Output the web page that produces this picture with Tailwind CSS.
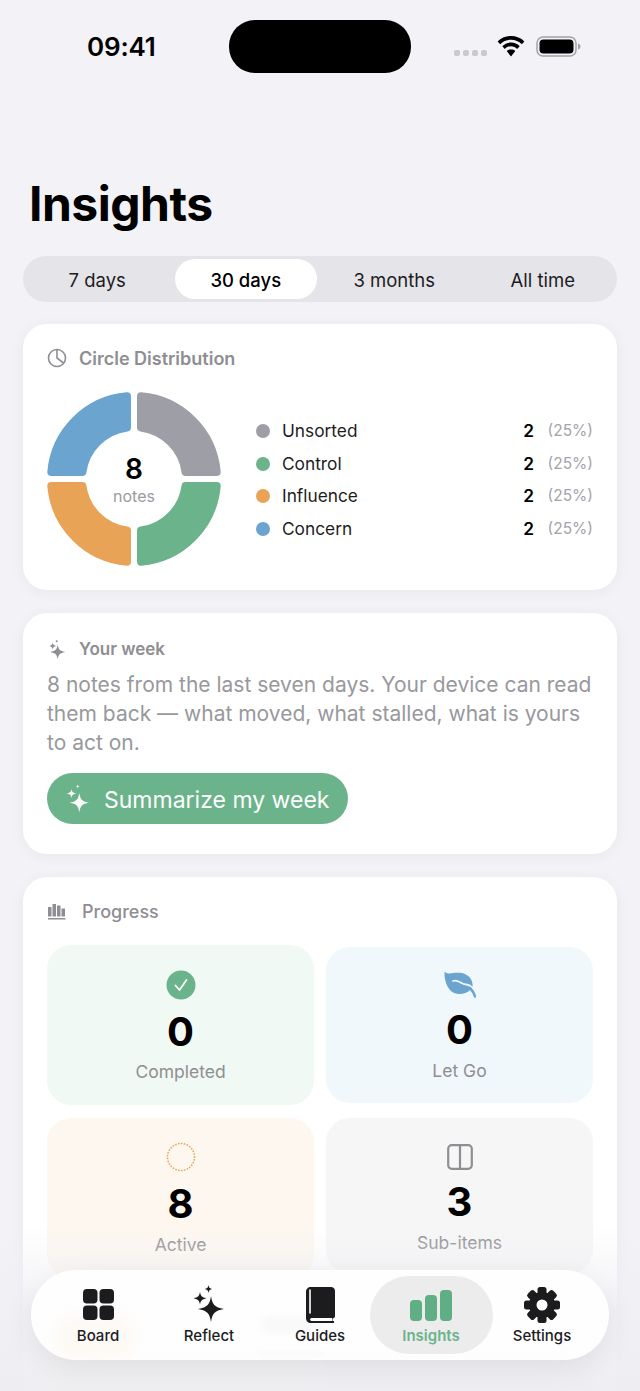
<!DOCTYPE html>
<html>

<head>
    <meta charset="utf-8">
    <script src="https://cdn.jsdelivr.net/npm/@tailwindcss/browser@4"></script>
</head>

<body class="bg-[#f2f2f7]">
    <div class="relative h-[1391px] w-[640px] overflow-hidden bg-[#f2f2f7] font-['Inter',sans-serif] text-black">

        <!-- status bar -->
        <div class="flex items-center pt-[20px] h-[73px]">
            <div class="w-[229px] pl-[87px] text-[26px] leading-[53px] font-semibold tracking-[-0.2px]">09:41</div>
            <div class="w-[182px] h-[53px] rounded-[26px] bg-black"></div>
            <div class="flex gap-[3px] ml-[43px] mt-[13px]">
                <div class="w-[6px] h-[6px] rounded-[2px] bg-[#c9c9ce]"></div>
                <div class="w-[6px] h-[6px] rounded-[2px] bg-[#c9c9ce]"></div>
                <div class="w-[6px] h-[6px] rounded-[2px] bg-[#c9c9ce]"></div>
                <div class="w-[6px] h-[6px] rounded-[2px] bg-[#c9c9ce]"></div>
            </div>
            <svg class="ml-[10px] mt-[0px]" width="28" height="21" viewBox="0 0 28 21">
                <path d="M14 0C8.8 0 4 2 .6 5.4l2.6 2.8C6 5.4 9.8 3.7 14 3.7s8 1.7 10.8 4.5l2.6-2.8C24 2 19.2 0 14 0Z" fill="#000" />
                <path d="M14 6.6c-3.4 0-6.5 1.3-8.7 3.6l2.6 2.7c1.6-1.6 3.7-2.6 6.1-2.6s4.500 1 6.100 2.600l2.600-2.700C20.500 7.900 17.400 6.600 14 6.600Z" fill="#000" />
                <path d="M14 13.300c-1.700 0-3.200.7-4.300 1.800L14 20.500l4.300-5.400c-1.100-1.100-2.600-1.800-4.300-1.800Z" fill="#000" />
            </svg>
            <svg class="ml-[11px] mt-[-1px]" width="45" height="21" viewBox="0 0 45 21">
                <rect x="1" y="1" width="39" height="19" rx="6" fill="none" stroke="#a3a3a8" stroke-width="1.500" />
                <rect x="3.500" y="3.500" width="34" height="14" rx="4" fill="#000" />
                <path d="M42 7.500c1.500.4 2.500 1.500 2.500 3s-1 2.600-2.500 3Z" fill="#a3a3a8" />
            </svg>
        </div>

        <div class="pl-[29px] pt-[102px] text-[48px] leading-[58px] font-bold tracking-[-0.5px]">Insights</div>

        <main class="px-[23px] mt-[23px]">
            <!-- range picker -->
            <div class="grid grid-cols-4 h-[46px] rounded-[23px] bg-[#e4e4e9] text-[18.500px] text-[#1c1c1e]">
                <div class="flex items-center justify-center pt-[3px]">7 days</div>
                <div class="flex items-center justify-center m-[3px] pt-[3px] rounded-[20px] bg-white font-medium text-black">30 days</div>
                <div class="flex items-center justify-center pt-[3px]">3 months</div>
                <div class="flex items-center justify-center pt-[3px]">All time</div>
            </div>

            <!-- circle distribution -->
            <section class="mt-[22px] h-[266px] rounded-[24px] bg-white px-[24px] pt-[24px] shadow-[0_2px_14px_rgba(0,0,0,0.05)]">
                <div class="flex items-center h-[20px] text-[18px] font-semibold text-[#8e8e93]">
                    <svg width="20" height="20" viewBox="0 0 20 20" fill="none" stroke="#8e8e93" stroke-width="1.600">
                        <circle cx="10" cy="10" r="8.500" />
                        <path d="M10 2v8l6.500 5" />
                    </svg>
                    <span class="ml-[12px]">Circle Distribution</span>
                </div>
                <div class="flex items-center mt-[24px]">
                    <div class="relative w-[174px] h-[174px] shrink-0">
                        <svg width="174" height="174" viewBox="0 0 174 174" stroke-width="8" stroke-linejoin="round">
                            <path d="M94 4.300A83 83 0 0 1 169.700 80L138.530 80A52 52 0 0 0 94 35.470Z" fill="#9e9ea7" stroke="#9e9ea7" />
                            <path d="M94 4.300A83 83 0 0 1 169.700 80L138.530 80A52 52 0 0 0 94 35.470Z" fill="#6bb38a" stroke="#6bb38a" transform="rotate(90 87 87)" />
                            <path d="M94 4.300A83 83 0 0 1 169.700 80L138.530 80A52 52 0 0 0 94 35.470Z" fill="#e9a357" stroke="#e9a357" transform="rotate(180 87 87)" />
                            <path d="M94 4.300A83 83 0 0 1 169.700 80L138.530 80A52 52 0 0 0 94 35.470Z" fill="#6aa4cf" stroke="#6aa4cf" transform="rotate(270 87 87)" />
                        </svg>
                        <div class="absolute inset-0 flex flex-col items-center justify-center">
                            <div class="text-[28px] leading-[34px] font-semibold">8</div>
                            <div class="text-[16px] leading-[20px] text-[#9a9a9f]">notes</div>
                        </div>
                    </div>
                    <div class="ml-[35px] mt-[2px] flex-1 flex flex-col gap-[12.500px] text-[17.300px] leading-[20px] text-[#1c1c1e]">
                        <div class="flex items-center">
                            <div class="w-[14px] h-[14px] rounded-full bg-[#9e9ea7]"></div>
                            <span class="ml-[12px] flex-1">Unsorted</span>
                            <span class="font-semibold text-black">2</span>
                            <span class="w-[59px] text-right text-[15.500px] text-[#a3a3a8]">(25%)</span>
                        </div>
                        <div class="flex items-center">
                            <div class="w-[14px] h-[14px] rounded-full bg-[#6bb38a]"></div>
                            <span class="ml-[12px] flex-1">Control</span>
                            <span class="font-semibold text-black">2</span>
                            <span class="w-[59px] text-right text-[15.500px] text-[#a3a3a8]">(25%)</span>
                        </div>
                        <div class="flex items-center">
                            <div class="w-[14px] h-[14px] rounded-full bg-[#e9a357]"></div>
                            <span class="ml-[12px] flex-1">Influence</span>
                            <span class="font-semibold text-black">2</span>
                            <span class="w-[59px] text-right text-[15.500px] text-[#a3a3a8]">(25%)</span>
                        </div>
                        <div class="flex items-center">
                            <div class="w-[14px] h-[14px] rounded-full bg-[#6aa4cf]"></div>
                            <span class="ml-[12px] flex-1">Concern</span>
                            <span class="font-semibold text-black">2</span>
                            <span class="w-[59px] text-right text-[15.500px] text-[#a3a3a8]">(25%)</span>
                        </div>
                    </div>
                </div>
            </section>

            <!-- your week -->
            <section class="mt-[23px] h-[241px] rounded-[24px] bg-white px-[24px] pt-[27px] shadow-[0_2px_14px_rgba(0,0,0,0.05)]">
                <div class="flex items-center h-[20px] text-[17px] font-semibold text-[#8e8e93]">
                    <svg width="20" height="20" viewBox="0 0 20 20" fill="#8e8e93">
                        <path d="M10.700 4.500c.7 4.800 2.200 6.500 7.500 7.500-5.300 1-6.800 2.700-7.500 7.500-.7-4.800-2.200-6.500-7.500-7.500 5.300-1 6.800-2.700 7.500-7.500Z" />
                        <path d="M5.700 2.500c.4 2.200 1 2.900 3.500 3.500-2.500.6-3.100 1.300-3.500 3.500-.4-2.200-1-2.900-3.500-3.500 2.500-.6 3.100-1.300 3.500-3.500Z" />
                        <circle cx="9.700" cy="1.200" r="1" />
                    </svg>
                    <span class="ml-[12px]">Your week</span>
                </div>
                <p class="mt-[10px] text-[21px] leading-[29px] text-[#98989d]">8 notes from the last seven days. Your device can read them back — what moved, what stalled, what is yours to act on.</p>
                <div class="mt-[16px] inline-flex items-center h-[51px] w-[301px] rounded-[26px] bg-[#6bb38a] pl-[19px] text-[23px] text-white">
                    <svg width="26" height="30" viewBox="0 0 26 30" fill="#fff">
                        <path d="M13.300 9c1 6.500 2.800 8.600 9.700 9.700-6.900 1.100-8.700 3.200-9.700 9.700-1-6.500-2.800-8.600-9.700-9.700 6.900-1.100 8.700-3.200 9.700-9.700Z" />
                        <path d="M5.500 5c.5 3 1.300 3.900 5 4.500-3.700.6-4.500 1.500-5 4.500-.5-3-1.300-3.900-5-4.500 3.700-.6 4.500-1.500 5-4.500Z" />
                        <path d="M11.700 .5c.2 1.300.6 1.700 2 2-1.400.3-1.800.7-2 2-.2-1.300-.6-1.700-2-2 1.400-.3 1.800-.7 2-2Z" />
                    </svg>
                    <span class="ml-[12px] pt-[3px]">Summarize my week</span>
                </div>
            </section>

            <!-- progress -->
            <section class="mt-[23px] rounded-[24px] bg-white px-[24px] pt-[24px] h-[600px] shadow-[0_2px_14px_rgba(0,0,0,0.05)]">
                <div class="flex items-center h-[20px] text-[18px] font-medium text-[#8e8e93]">
                    <svg width="20" height="20" viewBox="0 0 20 20" fill="#8e8e93">
                        <rect x="1" y="6" width="3.500" height="9.500" />
                        <rect x="5.500" y="3" width="3.500" height="12.500" />
                        <rect x="10" y="4.500" width="3.500" height="11" />
                        <rect x="14.500" y="7.500" width="3.500" height="8" />
                        <rect x="1" y="17" width="17.500" height="1.500" />
                    </svg>
                    <span class="ml-[15px]">Progress</span>
                </div>
                <div class="grid grid-cols-2 gap-x-[12px] gap-y-[13px] mt-[24px] items-start">
                    <div class="h-[160px] rounded-[24px] bg-[#f1f9f4] flex flex-col items-center pt-[25px]">
                        <svg width="30" height="30" viewBox="0 0 30 30">
                            <circle cx="15" cy="15" r="14.500" fill="#6bb38a" />
                            <path d="M9.500 15.500l4 4.500 7-10" fill="none" stroke="#fff" stroke-width="1.800" stroke-linecap="round" stroke-linejoin="round" />
                        </svg>
                        <div class="mt-[8px] text-[40px] leading-[48px] font-bold">0</div>
                        <div class="mt-[4px] text-[17.500px] leading-[24px] text-[#8e8e93]">Completed</div>
                    </div>
                    <div class="self-center h-[156px] rounded-[24px] bg-[#f1f8fc] flex flex-col items-center pt-[24px]">
                        <svg width="32" height="28" viewBox="0 0 32 28">
                            <path d="M.5 .7C4 4 9 1.500 15 1.800C23 2.200 28 7 28.500 13C28.800 15 28 17 27 18C24 22 18 23.500 13 22.800C5 21.500 0 12 .5 .7Z" fill="#6aa4cf" />
                            <path d="M9 10C14 8 17 13 22 13.500C25 13.800 27 15 28 17" fill="none" stroke="#f1f8fc" stroke-width="1.800" stroke-linecap="round" />
                            <path d="M26 17C28 19 30 22 31 25.500" fill="none" stroke="#6aa4cf" stroke-width="2.500" stroke-linecap="round" />
                        </svg>
                        <div class="mt-[7px] text-[40px] leading-[48px] font-bold">0</div>
                        <div class="mt-[5px] text-[17.500px] leading-[24px] text-[#8e8e93]">Let Go</div>
                    </div>
                    <div class="h-[160px] rounded-[24px] bg-[#fdf7f0] flex flex-col items-center pt-[24px]">
                        <svg width="30" height="30" viewBox="0 0 30 30">
                            <circle cx="15" cy="15" r="13.500" fill="none" stroke="#e9a357" stroke-width="1.700" stroke-dasharray="0.100 2.800" stroke-linecap="round" />
                        </svg>
                        <div class="mt-[8px] text-[40px] leading-[48px] font-bold">8</div>
                        <div class="mt-[5px] text-[17.500px] leading-[24px] text-[#8e8e93]">Active</div>
                    </div>
                    <div class="h-[156px] rounded-[24px] bg-[#f6f6f7] flex flex-col items-center pt-[26px]">
                        <svg width="26" height="26" viewBox="0 0 26 26" fill="none" stroke="#8e8e93" stroke-width="2.200">
                            <rect x="1.200" y="1.200" width="23.600" height="23.600" rx="3.500" />
                            <path d="M13 1v24" />
                        </svg>
                        <div class="mt-[8px] text-[40px] leading-[48px] font-bold">3</div>
                        <div class="mt-[5px] text-[17.500px] leading-[24px] text-[#8e8e93]">Sub-items</div>
                    </div>
                    <div class="h-[120px] rounded-[24px] bg-[#fdf7f0]"></div>
                    <div class="h-[120px] rounded-[24px] bg-[#f6f6f7]"></div>
                </div>
            </section>
        </main>

        <!-- fade under the tab bar -->
        <div class="absolute left-0 right-0 bottom-0 h-[165px] bg-gradient-to-b from-[#f2f2f7]/0 via-[#f0f0f4]/85 to-[#eeeef2]/95"></div>

        <!-- tab bar -->
        <nav class="absolute left-[31px] top-[1270px] w-[578px] h-[90px] rounded-[45px] bg-white/90 shadow-[0_8px_30px_rgba(0,0,0,0.07)] flex items-center px-[11.500px] text-[15px] leading-[18px] font-medium text-[#1c1c1e] overflow-hidden">
            <!-- what shows through the glass -->
            <div class="absolute left-[25px] top-[45px] w-[80px] h-[45px] rounded-[20px] bg-[#fdf3e6]/40 blur-[8px]"></div>
            <div class="absolute left-[230px] top-[46px] w-[62px] h-[18px] rounded-[6px] bg-black/[0.02] blur-[3px]"></div>
            <div class="absolute left-[228px] top-[81px] w-[66px] h-[6px] rounded-[3px] bg-black/[0.015] blur-[2px]"></div>

            <div class="relative w-[111px] shrink-0 h-[78px] flex flex-col items-center justify-between pt-[13px] pb-[9px]">
                <svg width="31" height="31" viewBox="0 0 31 31" fill="#1c1c1e">
                    <rect x="0" y="0" width="14.500" height="14.500" rx="4" />
                    <rect x="16.500" y="0" width="14.500" height="14.500" rx="4" />
                    <rect x="0" y="16.500" width="14.500" height="14.500" rx="4" />
                    <rect x="16.500" y="16.500" width="14.500" height="14.500" rx="4" />
                </svg>
                <span>Board</span>
            </div>
            <div class="relative w-[111px] shrink-0 h-[78px] flex flex-col items-center justify-between pt-[9px] pb-[9px]">
                <svg width="32" height="38" viewBox="0 0 32 38" fill="#1c1c1e">
                    <path d="M18 11c1.200 8 3.400 11.500 13 13-9.600 1.500-11.800 5-13 13-1.200-8-3.400-11.500-13-13 9.600-1.500 11.800-5 13-13Z" />
                    <path d="M7 6.800c.6 4 1.600 5.500 6.500 6.500-4.900 1-5.900 2.500-6.500 6.500-.6-4-1.600-5.500-6.500-6.500 4.900-1 5.900-2.500 6.500-6.500Z" />
                    <path d="M15.500 0c.4 2.500 1 3.300 4 4-3 .7-3.600 1.500-4 4-.4-2.500-1-3.300-4-4 3-.7 3.600-1.500 4-4Z" />
                </svg>
                <span>Reflect</span>
            </div>
            <div class="relative w-[111px] shrink-0 h-[78px] flex flex-col items-center justify-between pt-[11px] pb-[9px]">
                <svg width="29" height="36" viewBox="0 0 29 36">
                    <path d="M5 0h20c2 0 4 1.500 4 4v25c0 1.500-1 2.500-2.500 2.500V34h1.500v2H5c-3 0-5-2-5-5V5c0-3 2-5 5-5Z" fill="#1c1c1e" />
                    <path d="M4 3v23" stroke="#fff" stroke-width="1.600" stroke-linecap="round" />
                    <path d="M6 31h20v3H6c-1 0-2-.7-2-1.500S5 31 6 31Z" fill="#fff" />
                </svg>
                <span>Guides</span>
            </div>
            <div class="relative w-[123px] shrink-0 -mx-[6px] h-[78px] rounded-[39px] bg-[#ececed] flex flex-col items-center justify-between pt-[14px] pb-[9px] text-[#6bb38a]">
                <div class="flex items-end gap-[3px] h-[31px]">
                    <div class="w-[12px] h-[21px] rounded-[4px] bg-[#5fae84]"></div>
                    <div class="w-[12px] h-[26px] rounded-[4px] bg-[#5fae84]"></div>
                    <div class="w-[12px] h-[31px] rounded-[4px] bg-[#5fae84]"></div>
                </div>
                <span class="font-semibold">Insights</span>
            </div>
            <div class="relative w-[111px] shrink-0 h-[78px] flex flex-col items-center justify-between pt-[11px] pb-[9px]">
                <svg width="36" height="36" viewBox="0 0 36 36" fill="#1c1c1e">
                    <g>
                        <rect x="13.500" y="0" width="9" height="36" rx="2.500" />
                        <rect x="13.500" y="0" width="9" height="36" rx="2.500" transform="rotate(45 18 18)" />
                        <rect x="13.500" y="0" width="9" height="36" rx="2.500" transform="rotate(90 18 18)" />
                        <rect x="13.500" y="0" width="9" height="36" rx="2.500" transform="rotate(135 18 18)" />
                    </g>
                    <circle cx="18" cy="18" r="13" />
                    <circle cx="18" cy="18" r="5.500" fill="#fff" />
                </svg>
                <span>Settings</span>
            </div>
        </nav>
    </div>
</body>

</html>
